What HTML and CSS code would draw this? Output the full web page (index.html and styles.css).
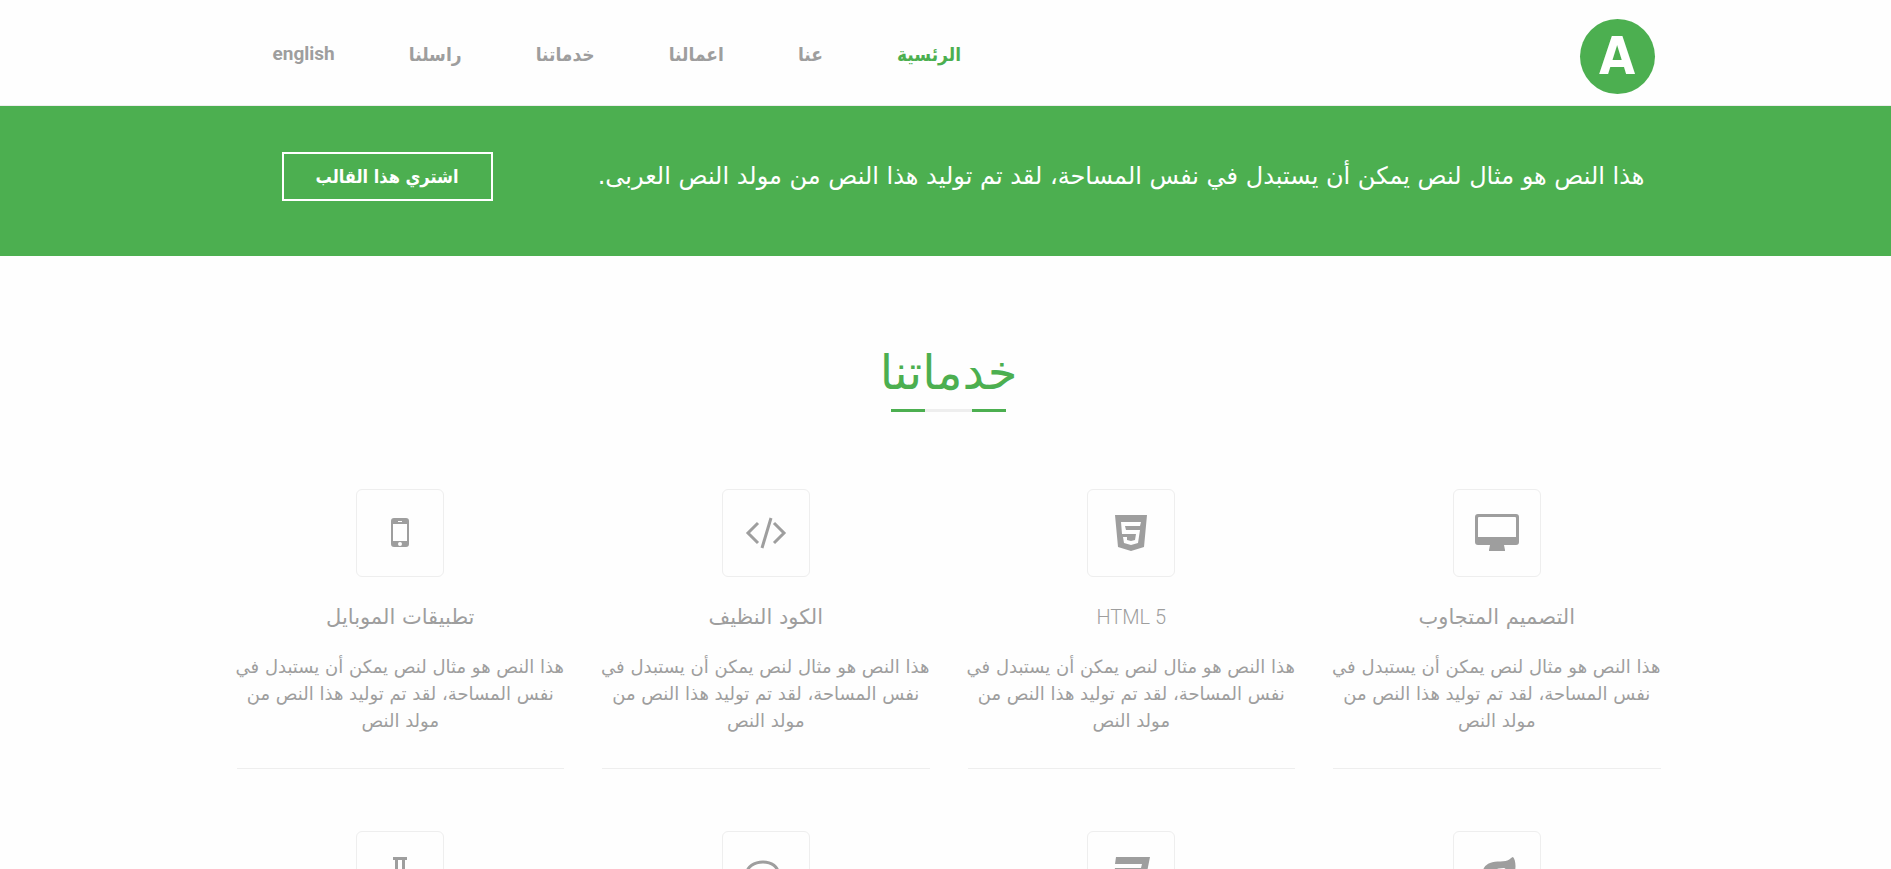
FILE: index.html
```
<!DOCTYPE html>
<html lang="ar" dir="rtl">
<head>
    <meta charset="UTF-8">
    <meta name="viewport" content="width=device-width, initial-scale=1.0">
    <title>خدماتنا</title>
    <link rel="stylesheet" href="styles.css">
</head>
<body>
    <header class="header">
        <div class="container header-inner">
            <a href="#" class="logo">A</a>
            <nav class="nav">
                <a href="#" class="active">الرئسية</a>
                <a href="#about">عنا</a>
                <a href="#works">اعمالنا</a>
                <a href="#services">خدماتنا</a>
                <a href="#contact">راسلنا</a>
                <a href="#en" class="latin">english</a>
            </nav>
        </div>
    </header>

    <section class="banner">
        <div class="container banner-inner">
            <p>هذا النص هو مثال لنص يمكن أن يستبدل في نفس المساحة، لقد تم توليد هذا النص من مولد النص العربى.</p>
            <button type="button" class="buy-button">اشتري هذا القالب</button>
        </div>
    </section>

    <main class="services" id="services">
        <div class="container">
            <h1>خدماتنا</h1>
            <div class="title-line"></div>

            <div class="cards">
                <article class="card">
                    <div class="icon-box">
                        <svg width="44" height="38" viewBox="0 0 44 38">
                            <path fill-rule="evenodd" d="M3 0h38a3 3 0 0 1 3 3v25a3 3 0 0 1-3 3H29l1 5v1H14v-1l1-5H3a3 3 0 0 1-3-3V3a3 3 0 0 1 3-3zM4 3a1 1 0 0 0-1 1v19h38V4a1 1 0 0 0-1-1z"/>
                        </svg>
                    </div>
                    <h2>التصميم المتجاوب</h2>
                    <p>هذا النص هو مثال لنص يمكن أن يستبدل في<br>نفس المساحة، لقد تم توليد هذا النص من<br>مولد النص</p>
                </article>
                <article class="card">
                    <div class="icon-box">
                        <svg width="32" height="36" viewBox="0 0 32 36">
                            <path fill-rule="evenodd" d="M0 0h32l-3 32-13 4-13-4zM6 7l1 12h14l-1 6-4 1-4-1v-3H8l1 6 7 2 7-2 2-13H11l-1-4h15l1-4z"/>
                        </svg>
                    </div>
                    <h2 class="latin">HTML 5</h2>
                    <p>هذا النص هو مثال لنص يمكن أن يستبدل في<br>نفس المساحة، لقد تم توليد هذا النص من<br>مولد النص</p>
                </article>
                <article class="card">
                    <div class="icon-box">
                        <svg class="stroked" width="42" height="32" viewBox="0 0 42 32">
                            <path d="M13 6L3 16l10 10M29 6l10 10-10 10M26 1l-9 30"/>
                        </svg>
                    </div>
                    <h2>الكود النظيف</h2>
                    <p>هذا النص هو مثال لنص يمكن أن يستبدل في<br>نفس المساحة، لقد تم توليد هذا النص من<br>مولد النص</p>
                </article>
                <article class="card">
                    <div class="icon-box">
                        <svg width="18" height="30" viewBox="0 0 18 30">
                            <path fill-rule="evenodd" d="M3 0h12a3 3 0 0 1 3 3v23a3 3 0 0 1-3 3H3a3 3 0 0 1-3-3V3a3 3 0 0 1 3-3zM2 6v17h14V6zM7 3v1h4V3zM9 24a2 2 0 1 0 0 4 2 2 0 0 0 0-4z"/>
                        </svg>
                    </div>
                    <h2>تطبيقات الموبايل</h2>
                    <p>هذا النص هو مثال لنص يمكن أن يستبدل في<br>نفس المساحة، لقد تم توليد هذا النص من<br>مولد النص</p>
                </article>

                <div class="icon-box">
                    <svg width="38" height="36" viewBox="0 0 38 36">
                        <path d="M35 0c3 3 4 14-1 22-6 10-17 12-24 8-2 1-4 5-7 5-2 0-3-2-2-3 1-2 4-4 5-6C3 17 4 9 12 6c6-3 15 0 20-4 1-1 2-2 3-2zM26 11c-8 0-13 3-17 8-1 2 1 3 2 2 4-4 8-7 15-7 2 0 2-3 0-3z"/>
                    </svg>
                </div>
                <div class="icon-box">
                    <svg width="37" height="36" viewBox="0 0 37 36">
                        <path d="M3 0h34l-6 30-16 6-15-6 2-8h6l-1 4 9 4 10-4 1-6H0l2-9h26l1-4H2z"/>
                    </svg>
                </div>
                <div class="icon-box">
                    <svg class="stroked" width="42" height="30" viewBox="0 0 42 30">
                        <path d="M18 2c9 0 15 5 15 11s-6 11-15 11c-2 0-4 0-6-1-3 3-6 4-9 4 2-2 3-4 3-6-2-2-4-5-4-8C2 7 9 2 18 2zM37 10c4 5 2 10-1 13 0 2 1 4 3 6-4 0-6-2-9-4"/>
                    </svg>
                </div>
                <div class="icon-box">
                    <svg width="34" height="36" viewBox="0 0 34 36">
                        <path fill-rule="evenodd" d="M10 0h14v3h-2v10l10 17c2 3 0 6-3 6H5c-3 0-5-3-3-6l10-17V3h-2zM15 3v11l-5 9h14l-5-9V3z"/>
                    </svg>
                </div>
            </div>
        </div>
    </main>
</body>
</html>
```

FILE: styles.css
```
* {
    box-sizing: border-box;
}
body {
    margin: 0;
    background-color: #fefefe;
    color: #9e9e9e;
    font-family: "DejaVu Sans", sans-serif;
    font-size: 18px;
}
h1, h2, p {
    margin: 0;
    font-weight: normal;
}
.container {
    width: 100%;
    max-width: 1430px;
    margin: 0 auto;
    padding-left: 6px;
}
.header {
    border-bottom: 1px solid #eeeeee;
}
.header-inner {
    display: flex;
    align-items: center;
    justify-content: space-between;
    height: 105px;
    padding-left: 42px;
    padding-right: 6px;
}
.logo {
    width: 75px;
    height: 75px;
    margin-top: 7px;
    border-radius: 50%;
    background-color: #4caf50;
    color: #ffffff;
    font-family: "DejaVu Sans Condensed", sans-serif;
    font-size: 52px;
    font-weight: bold;
    line-height: 75px;
    text-align: center;
    text-decoration: none;
}
.nav {
    display: flex;
    gap: 74px;
    margin-top: 3px;
}
.nav a {
    color: #9e9e9e;
    font-family: "DejaVu Sans Condensed", "DejaVu Sans", sans-serif;
    font-size: 19px;
    font-weight: bold;
    line-height: 28px;
    text-decoration: none;
}
.nav a.active {
    color: #4caf50;
}
.nav a.latin {
    font-family: Roboto, sans-serif;
}
.banner {
    background-color: #4caf50;
    color: #ffffff;
}
.banner-inner {
    display: flex;
    align-items: flex-start;
    justify-content: space-between;
    height: 150px;
    padding: 46px 16px 0 51px;
}
.banner p {
    font-size: 24px;
    line-height: 49px;
    white-space: nowrap;
}
.buy-button {
    width: 211px;
    height: 49px;
    border: 2px solid #ffffff;
    background-color: transparent;
    color: #ffffff;
    font-family: "DejaVu Sans Condensed", "DejaVu Sans", sans-serif;
    font-size: 18px;
    font-weight: bold;
    cursor: pointer;
}
.services {
    padding-top: 80px;
}
.services h1 {
    color: #4caf50;
    font-size: 48px;
    line-height: 73px;
    text-align: center;
}
.title-line {
    width: 115px;
    height: 3px;
    margin: 0 auto;
    border: solid #4caf50;
    border-width: 0 34px;
    background-color: #eeeeee;
}
.cards {
    display: grid;
    grid-template-columns: repeat(4, minmax(0, 1fr));
    column-gap: 38px;
    row-gap: 62px;
    margin-top: 77px;
    justify-items: center;
}
.card {
    width: 100%;
    padding-bottom: 34px;
    border-bottom: 1px solid #eeeeee;
    text-align: center;
}
.icon-box {
    display: flex;
    align-items: center;
    justify-content: center;
    width: 88px;
    height: 88px;
    margin: 0 auto;
    border: 1px solid #eeeeee;
    border-radius: 6px;
}
.icon-box svg {
    fill: #9e9e9e;
}
.icon-box svg.stroked {
    fill: none;
    stroke: #9e9e9e;
    stroke-width: 3;
}
.card h2 {
    margin-top: 24px;
    font-size: 21px;
    line-height: 32px;
}
.card h2.latin {
    font-family: Roboto, sans-serif;
    font-size: 20px;
    font-weight: 300;
}
.card p {
    margin-top: 20px;
    line-height: 27px;
    white-space: nowrap;
}
```
